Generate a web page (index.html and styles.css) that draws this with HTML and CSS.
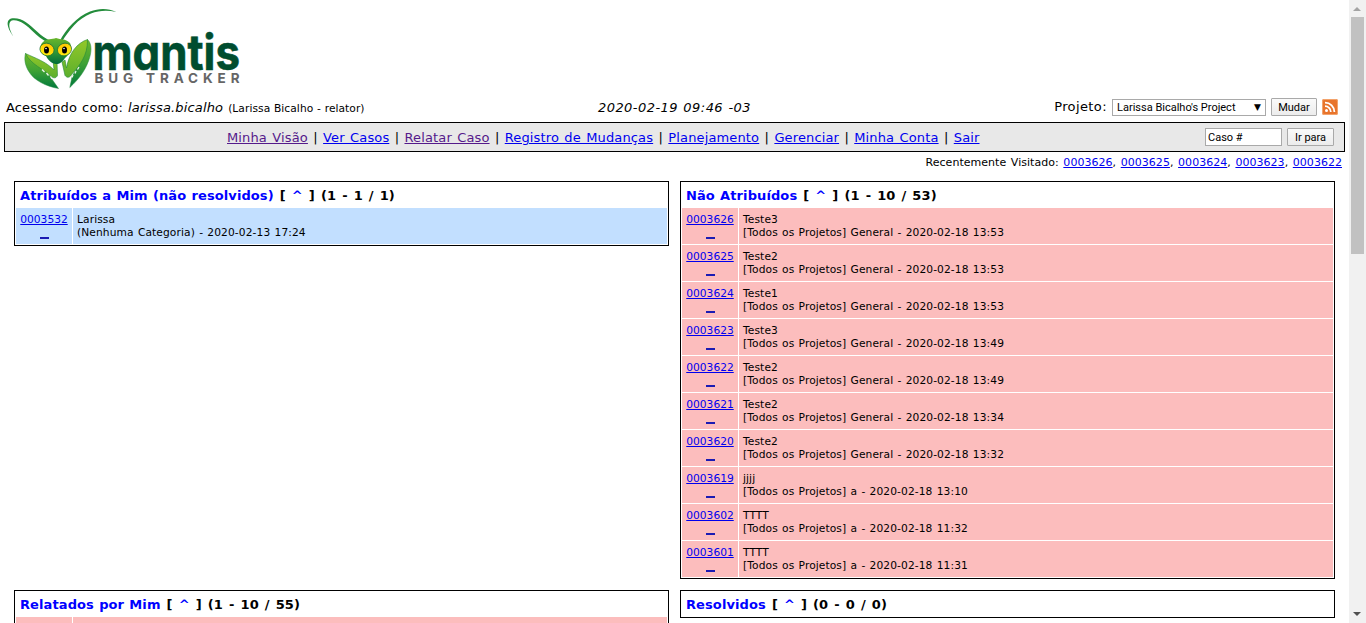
FILE: index.html
```html
<!DOCTYPE html>
<html lang="pt-BR">
<head>
<meta charset="utf-8">
<title>Mantis Bug Tracker</title>
<link rel="stylesheet" href="styles.css">
</head>
<body>
<div class="page">
  <header class="logo">
    <svg width="250" height="92" viewBox="0 0 250 92" role="img" aria-label="Mantis Bug Tracker">
      <defs>
        <linearGradient id="claw" x1="0" y1="0" x2="0" y2="1"><stop offset="0" stop-color="#6cb82b"/><stop offset=".5" stop-color="#3ea135"/><stop offset="1" stop-color="#00793c"/></linearGradient>
        <linearGradient id="arm" x1="0" y1="0" x2="0" y2="1"><stop offset="0" stop-color="#93c829"/><stop offset="1" stop-color="#5caf2d"/></linearGradient>
        <linearGradient id="head" x1="0" y1="0" x2="0" y2="1"><stop offset="0" stop-color="#69b52b"/><stop offset=".5" stop-color="#349b35"/><stop offset="1" stop-color="#006c3b"/></linearGradient>
        <linearGradient id="eye" x1="0" y1="0" x2="0" y2="1"><stop offset="0" stop-color="#ffc400"/><stop offset="1" stop-color="#ffee10"/></linearGradient>
      </defs>
      <path class="feeler" d="M13.5 36.5C7.500 28.500 4.500 19.500 12.500 18.300C22 17.500 29 24 37 31.500C41.500 36 45.500 38.500 51.500 41.500L49.500 43.500C43 40 39 37.500 34 32.500C26.500 25 20 19.800 13 20.300C7.500 21 8.500 29 13.500 36.500Z"/>
      <path class="feeler" d="M59.500 41.500C66 29 77 16.500 90 11.500C99 8 108 8 116.500 12C107 10 99 10.500 91 13.500C78 18.500 69 30 61.500 42.500Z"/>
      <path class="blade" d="M25.500 53.500C32 61 44 67 49 75L58.500 88.500C46 86.500 34 80 29.500 72.500C25 66 24 59 25.500 53.500Z"/>
      <path class="arm" d="M25.500 53.500C35 58 46 61.500 54 70L53 60L57 62L57.500 75.500C56 78.500 53.500 78.500 50.500 76C44 69 31 65 25.500 53.500Z"/>
      <path class="blade" d="M87.500 39.500C92.500 44 91.500 53 88.500 61C85 71 78 80 69.800 87.500L72 77C75 70 84 58 87.500 39.500Z"/>
      <path class="arm" d="M87.500 39.500C77 43 69 53 66.500 68L65 60L62 62L65 75.500C67.500 78.500 70 77.500 72 74C79 66 88 56 87.500 39.500Z"/>
      <path class="teeth" d="M42 69.500l2.500 2.500M46.500 73l2 2.500M50.500 76.500l1.500 2.500M79 67l-1.500 2.500M76 71l-1 2.500M73 75l-1 2.500"/>
      <path class="head" d="M42 43C47 37.500 52 40 56 38C61 40 65 38 70 43C73 48 69 55 65 58C62 62 60 64 56 64C52 64 48 60 46 56C41 52 39 47 42 43Z"/>
      <ellipse class="eye" cx="47" cy="49.500" rx="7.200" ry="6.200" transform="rotate(22 47 49.500)"/>
      <ellipse class="eye" cx="64.500" cy="49.500" rx="7.200" ry="6.200" transform="rotate(-22 64.500 49.500)"/>
      <ellipse cx="46.500" cy="50" rx="2.500" ry="3.600"/><ellipse cx="64.500" cy="50" rx="2.500" ry="3.600"/>
      <circle class="glint" cx="46" cy="48.500" r=".8"/><circle class="glint" cx="64" cy="48.500" r=".8"/>
      <text class="brand" x="92.500" y="69.500" textLength="147.500" lengthAdjust="spacingAndGlyphs">mantis</text>
      <text class="tagline" x="94.500" y="82.500" textLength="145">BUG TRACKER</text>
    </svg>
  </header>

  <div class="login">
    <div class="who">Acessando como: <i class="user">larissa.bicalho</i> <small>(Larissa Bicalho - relator)</small></div>
    <div class="clock">2020-02-19 09:46 -03</div>
    <div class="project"><span class="label">Projeto:</span><span class="select">Larissa Bicalho's Project<b class="arrow">▼</b></span><span class="button change">Mudar</span>
      <svg class="rss" width="16" height="16" viewBox="0 0 16 16"><rect width="16" height="16" rx="2" fill="#e8742b"/><rect x=".5" y=".5" width="15" height="15" rx="1.500" fill="none" stroke="#f3a36c"/><circle cx="4.500" cy="11.500" r="1.500" fill="#fff"/><path d="M3 7.200A5.800 5.800 0 0 1 8.800 13M3 3.600A9.400 9.400 0 0 1 12.400 13" fill="none" stroke="#fff" stroke-width="1.800"/></svg>
    </div>
  </div>

  <nav class="menu">
    <div class="links"><a class="seen">Minha Visão</a> | <a>Ver Casos</a> | <a class="seen">Relatar Caso</a> | <a>Registro de Mudanças</a> | <a>Planejamento</a> | <a>Gerenciar</a> | <a>Minha Conta</a> | <a>Sair</a></div>
    <div class="jump"><span class="input">Caso #</span><span class="button go">Ir para</span></div>
  </nav>

  <div class="recent">Recentemente Visitado: <a>0003626</a>, <a>0003625</a>, <a>0003624</a>, <a>0003623</a>, <a>0003622</a></div>

  <main class="boxes">
    <section class="box">
      <h2><span class="title">Atribuídos a Mim (não resolvidos)</span> [ <span>^</span> ] (1 - 1 / 1)</h2>
      <div class="row blue"><div class="id"><a>0003532</a><i></i></div><div class="info">Larissa<br>(Nenhuma Categoria) - 2020-02-13 17:24</div></div>
    </section>
    <section class="box">
      <h2><span class="title">Não Atribuídos</span> [ <span>^</span> ] (1 - 10 / 53)</h2>
      <div class="row"><div class="id"><a>0003626</a><i></i></div><div class="info">Teste3<br>[Todos os Projetos] General - 2020-02-18 13:53</div></div>
      <div class="row"><div class="id"><a>0003625</a><i></i></div><div class="info">Teste2<br>[Todos os Projetos] General - 2020-02-18 13:53</div></div>
      <div class="row"><div class="id"><a>0003624</a><i></i></div><div class="info">Teste1<br>[Todos os Projetos] General - 2020-02-18 13:53</div></div>
      <div class="row"><div class="id"><a>0003623</a><i></i></div><div class="info">Teste3<br>[Todos os Projetos] General - 2020-02-18 13:49</div></div>
      <div class="row"><div class="id"><a>0003622</a><i></i></div><div class="info">Teste2<br>[Todos os Projetos] General - 2020-02-18 13:49</div></div>
      <div class="row"><div class="id"><a>0003621</a><i></i></div><div class="info">Teste2<br>[Todos os Projetos] General - 2020-02-18 13:34</div></div>
      <div class="row"><div class="id"><a>0003620</a><i></i></div><div class="info">Teste2<br>[Todos os Projetos] General - 2020-02-18 13:32</div></div>
      <div class="row"><div class="id"><a>0003619</a><i></i></div><div class="info">jjjj<br>[Todos os Projetos] a - 2020-02-18 13:10</div></div>
      <div class="row"><div class="id"><a>0003602</a><i></i></div><div class="info">TTTT<br>[Todos os Projetos] a - 2020-02-18 11:32</div></div>
      <div class="row"><div class="id"><a>0003601</a><i></i></div><div class="info">TTTT<br>[Todos os Projetos] a - 2020-02-18 11:31</div></div>
    </section>
    <section class="box">
      <h2><span class="title">Relatados por Mim</span> [ <span>^</span> ] (1 - 10 / 55)</h2>
      <div class="row"><div class="id"></div><div class="info"></div></div>
    </section>
    <section class="box">
      <h2><span class="title">Resolvidos</span> [ <span>^</span> ] (0 - 0 / 0)</h2>
    </section>
  </main>
</div>
<div class="scrollbar">
  <svg width="17" height="17"><path d="M4 11h8L8 7z" fill="#a3a3a3"/></svg>
  <div class="thumb"></div>
  <svg width="17" height="17"><path d="M4 6h8L8 10z" fill="#505050"/></svg>
</div>
</body>
</html>
```
FILE: styles.css
```css
* { box-sizing: border-box; }
body { margin: 0; height: 623px; overflow: hidden; display: flex; background: #fff; color: #000; font: 10.67px/13px Verdana, "DejaVu Sans", sans-serif; }
.page { width: 1349px; height: 623px; overflow: hidden; }
a { color: #0000ee; text-decoration: underline; }
a.seen { color: #551a8b; }

.logo { height: 97px; }
.logo svg { display: block; overflow: visible; }
.feeler { fill: #238c3b; }
.blade { fill: url(#claw); stroke: #23883a; stroke-width: .5; }
.arm { fill: url(#arm); stroke: #23883a; stroke-width: .6; }
.teeth { fill: none; stroke: #eef6ea; stroke-width: 1.3; }
.head { fill: url(#head); }
.eye { fill: url(#eye); stroke: #166e36; stroke-width: .7; }
.glint { fill: #fff; }
.brand { font: 700 48.500px Inter, sans-serif; font-feature-settings: "cv11"; fill: #004d2f; stroke: #004d2f; stroke-width: .6; }
.tagline { font: 700 13.500px Inter, sans-serif; fill: #666; }

.login { height: 25px; padding: 0 11px 0 6px; display: grid; grid-template-columns: 446px 445px 1fr; line-height: 20px; }
.who { padding-top: 1px; white-space: nowrap; font-size: 13px; letter-spacing: .15px; word-spacing: .7px; }
.who small { font-size: 10.67px; letter-spacing: .06px; word-spacing: .3px; }
.clock { padding-top: 1px; text-align: center; font-style: italic; font-size: 13px; letter-spacing: .45px; word-spacing: .8px; }
.project { display: flex; justify-content: flex-end; align-items: center; height: 20px; font-size: 13px; }
.label { margin-right: 5px; letter-spacing: .4px; }
.select, .button, .input { font: 11px/17px Roboto, "Liberation Sans", sans-serif; white-space: nowrap; }
.select { display: flex; justify-content: space-between; width: 154px; height: 17px; line-height: 15px; padding: 0 4px; border: 1px solid #a9a9a9; background: #fff; }
.arrow { font: 9px/15px "DejaVu Sans", sans-serif; }
.button { height: 18px; text-align: center; border: 1px solid #a9a9a9; border-radius: 1px; background: linear-gradient(#fafafa, #ececec); }
.change { width: 46px; margin: 0 5px; }
.go { width: 47px; }

.menu { margin: 0 4px; height: 30px; border: 1px solid #000; background: #e8e8e8; display: flex; justify-content: space-between; align-items: center; padding: 0 10px 0 222px; }
.links { padding-top: 2px; font-size: 13px; line-height: 18px; white-space: nowrap; letter-spacing: .14px; word-spacing: 1.05px; }
.jump { display: flex; gap: 5px; }
.input { width: 77px; height: 18px; border: 1px solid #a9a9a9; background: #fff; padding-left: 2px; }

.recent { height: 29px; padding: 4px 7px 0 0; text-align: right; font-size: 11px; letter-spacing: .03px; word-spacing: 1.1px; }

.boxes { display: grid; grid-template-columns: 655px 655px; column-gap: 11px; row-gap: 11px; padding-left: 14px; align-items: start; }
.box { border: 1px solid #000; padding: 0 1px; }
.box h2 { margin: 0; height: 26px; padding: 5px 4px 0; font-size: 13px; line-height: 18px; white-space: nowrap; letter-spacing: .1px; word-spacing: 1.4px; }
.box h2 span { color: #0000ff; }
.box h2 .title { word-spacing: .6px; }
.row { display: grid; grid-template-columns: 56px 1fr; gap: 1px; height: 36px; margin-bottom: 1px; }
.id, .info { background: #fcbdbd; padding: 5px 4px 0; }
.info { letter-spacing: .1px; word-spacing: .75px; }
.blue .id, .blue .info { background: #c2dfff; }
.id { text-align: center; }
.id i { display: block; width: 9px; height: 2px; margin: 11px auto 0; background: #1b1bb3; }

.scrollbar { width: 17px; height: 623px; background: #f1f1f1; display: flex; flex-direction: column; align-items: center; }
.scrollbar svg { flex: none; }
.scrollbar svg:last-child { margin-top: auto; }
.thumb { width: 13px; height: 237px; background: #c1c1c1; }
```
